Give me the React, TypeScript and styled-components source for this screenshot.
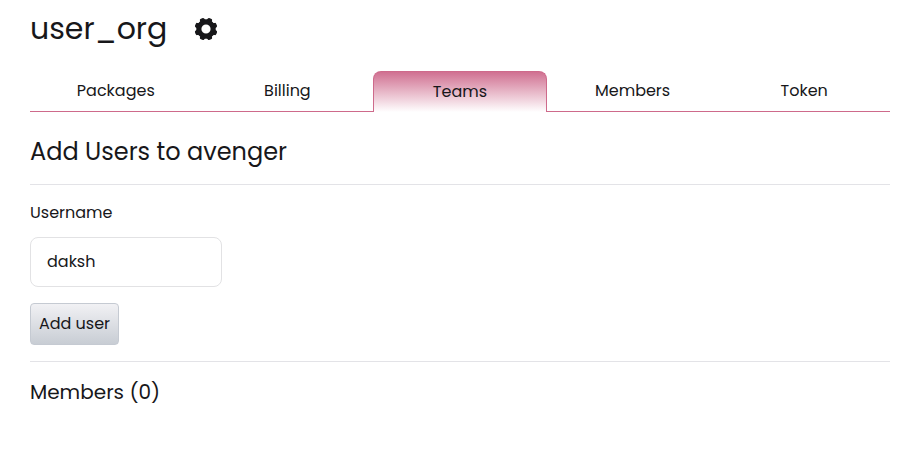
import React from "react";
import styled, { createGlobalStyle, css } from "styled-components";

const GlobalStyle = createGlobalStyle`
  *, *::before, *::after { box-sizing: border-box; }
  body {
    margin: 0;
    background: #fff;
    color: #17171a;
    font-family: Poppins, Inter, "Liberation Sans", sans-serif;
    font-feature-settings: "cv11";
    font-size: 16px;
    line-height: 24px;
  }
`;

const Page = styled.main`
  width: 904px;
  padding: 6px 14px 0 30px;
  display: flex;
  flex-direction: column;
  align-items: stretch;
`;

const Header = styled.header`
  display: flex;
  align-items: center;
  height: 46px;
  gap: 27px;
`;

const Title = styled.h1`
  margin: 0;
  font-weight: 400;
  font-size: 30px;
  line-height: 46px;
`;

const SettingsButton = styled.button`
  display: flex;
  padding: 0;
  border: 0;
  background: none;
  color: inherit;
`;

const Tabs = styled.nav`
  display: flex;
  height: 41px;
  margin-top: 19px;
  border-bottom: 1px solid #ce6a8b;
`;

const Tab = styled.a<{ $active?: boolean }>`
  flex: 1 1 0;
  display: flex;
  justify-content: center;
  height: 40px;
  padding-top: 8px;
  ${(p) =>
    p.$active &&
    css`
      height: 41px;
      border: 1px solid #ce6a8b;
      border-bottom: 0;
      border-radius: 8px 8px 0 0;
      background: linear-gradient(#d07091, #fff);
    `}
`;

const Heading = styled.h2`
  margin: 0;
  padding: 21px 0 14px;
  border-bottom: 1px solid #e3e3e7;
  font-weight: 400;
  font-size: 24px;
  line-height: 37px;
`;

const Form = styled.form`
  display: flex;
  flex-direction: column;
  align-items: flex-start;
  height: 177px;
  padding-top: 16px;
  border-bottom: 1px solid #e3e3e7;
`;

const Label = styled.label`
  height: 36px;
`;

const Input = styled.input`
  width: 192px;
  height: 50px;
  padding: 0 16px 2px;
  border: 1px solid #e2e2e4;
  border-radius: 8px;
  outline: none;
  background: #fff;
  color: inherit;
  font: inherit;
  font-feature-settings: inherit;
`;

const SubmitButton = styled.button`
  width: 89px;
  height: 42px;
  margin-top: 16px;
  padding: 0 0 1px;
  border: 1px solid #c5cad2;
  border-radius: 4px;
  background: linear-gradient(#f1f1f4, #c8cdd4);
  color: inherit;
  font: inherit;
  font-feature-settings: inherit;
  white-space: nowrap;
`;

const MembersHeading = styled.h3`
  margin: 0;
  padding-top: 15px;
  font-weight: 400;
  font-size: 20px;
  line-height: 30px;
`;

const TOOTH_ANGLES = [22.5, 67.5, 112.5, 157.5, 202.5, 247.5, 292.5, 337.5];

const GearIcon = () => (
  <svg width="24" height="24" viewBox="-12 -12 24 24" aria-hidden="true">
    <circle r="7.15" fill="none" stroke="currentColor" strokeWidth="5.1" />
    {TOOTH_ANGLES.map((angle) => (
      <path
        key={angle}
        transform={`rotate(${angle})`}
        fill="currentColor"
        d="M-3.2-8.6Q-2.4-9.2-2.3-10.4Q-2.1-11.3-1.3-11.4Q0-11.6 1.3-11.4Q2.1-11.3 2.3-10.4Q2.4-9.2 3.2-8.6Z"
      />
    ))}
  </svg>
);

const tabs = [
  { label: "Packages" },
  { label: "Billing" },
  { label: "Teams", active: true },
  { label: "Members" },
  { label: "Token" },
];

export default function App() {
  return (
    <>
      <GlobalStyle />
      <Page>
        <Header>
          <Title>user_org</Title>
          <SettingsButton aria-label="Settings">
            <GearIcon />
          </SettingsButton>
        </Header>
        <Tabs>
          {tabs.map((t) => (
            <Tab key={t.label} $active={t.active}>
              {t.label}
            </Tab>
          ))}
        </Tabs>
        <Heading>Add Users to avenger</Heading>
        <Form onSubmit={(e) => e.preventDefault()}>
          <Label htmlFor="username">Username</Label>
          <Input id="username" defaultValue="daksh" />
          <SubmitButton type="submit">Add user</SubmitButton>
        </Form>
        <MembersHeading>Members (0)</MembersHeading>
      </Page>
    </>
  );
}
